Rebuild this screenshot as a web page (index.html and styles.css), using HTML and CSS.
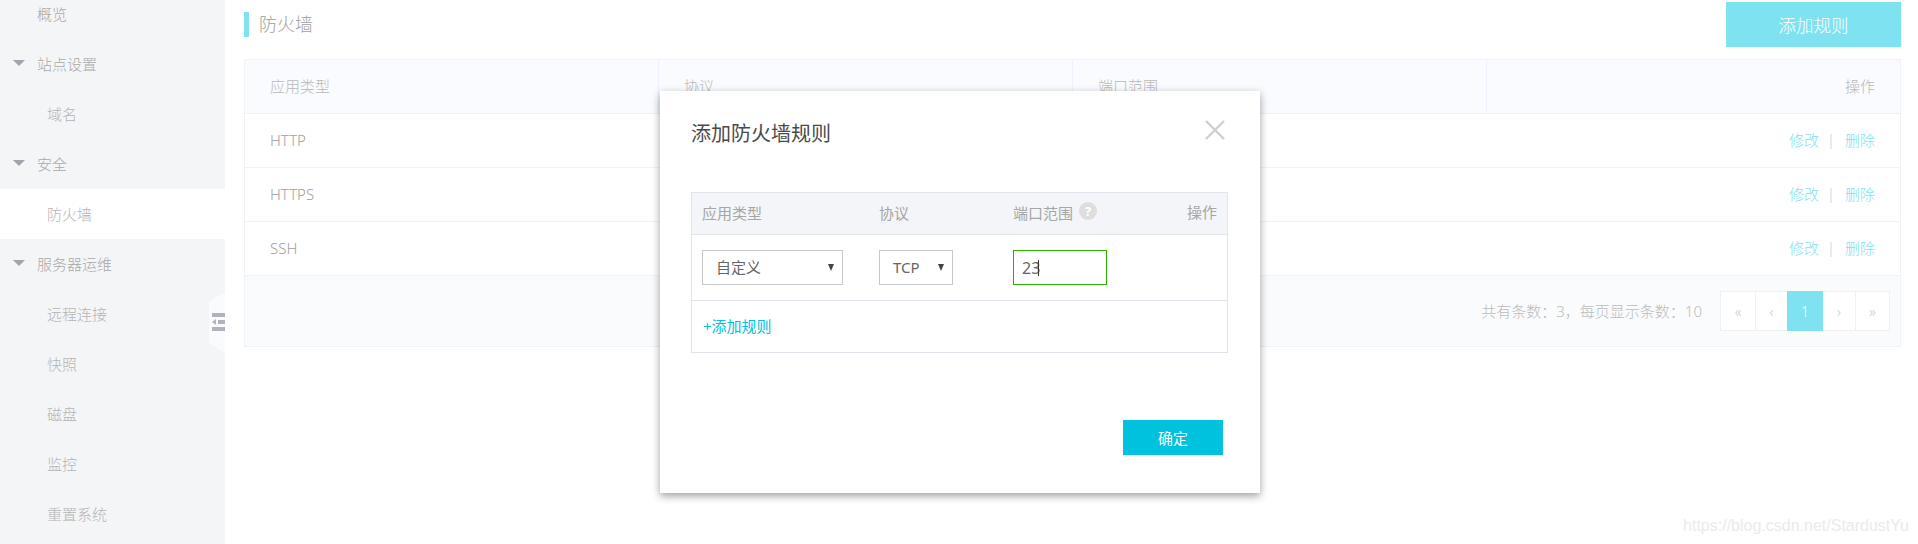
FILE: index.html
```html
<!DOCTYPE html>
<html lang="zh">
<head>
<meta charset="utf-8">
<title>防火墙</title>
<link rel="stylesheet" href="styles.css">
</head>
<body>
<div class="page">
  <nav class="sidebar">
    <div class="nav-item">概览</div>
    <div class="nav-item"><i class="tri"></i>站点设置</div>
    <div class="nav-item sub">域名</div>
    <div class="nav-item"><i class="tri"></i>安全</div>
    <div class="nav-item sub active">防火墙</div>
    <div class="nav-item"><i class="tri"></i>服务器运维</div>
    <div class="nav-item sub">远程连接</div>
    <div class="nav-item sub">快照</div>
    <div class="nav-item sub">磁盘</div>
    <div class="nav-item sub">监控</div>
    <div class="nav-item sub">重置系统</div>
    <div class="toggle">
      <svg width="19" height="62" viewBox="0 0 19 62">
        <polygon points="19,0 3,10 3,51 19,61" fill="#fafbfc"/>
        <rect x="6" y="21" width="13" height="4" fill="#aeb3bd"/>
        <rect x="12" y="28" width="7" height="4" fill="#aeb3bd"/>
        <polygon points="6,30 10,27 10,33" fill="#aeb3bd"/>
        <rect x="6" y="35" width="13" height="4" fill="#aeb3bd"/>
      </svg>
    </div>
  </nav>
  <main class="main">
    <header class="topbar">
      <h1 class="page-title">防火墙</h1>
      <button class="add-btn">添加规则</button>
    </header>
    <table class="rules">
      <colgroup><col class="c1"><col class="c1"><col class="c1"><col></colgroup>
      <thead>
        <tr><th>应用类型</th><th>协议</th><th>端口范围</th><th class="right">操作</th></tr>
      </thead>
      <tbody>
        <tr><td>HTTP</td><td></td><td></td><td class="right"><a>修改</a><span class="sep"></span><a>删除</a></td></tr>
        <tr><td>HTTPS</td><td></td><td></td><td class="right"><a>修改</a><span class="sep"></span><a>删除</a></td></tr>
        <tr><td>SSH</td><td></td><td></td><td class="right"><a>修改</a><span class="sep"></span><a>删除</a></td></tr>
      </tbody>
      <tfoot>
        <tr><td colspan="4">
          <div class="foot">
            <span class="count">共有条数：3，每页显示条数：10</span>
            <div class="pager">
              <span>«</span><span class="mid">‹</span><span class="on">1</span><span class="mid">›</span><span>»</span>
            </div>
          </div>
        </td></tr>
      </tfoot>
    </table>
  </main>
  <section class="modal">
    <div class="modal-head">
      <h2 class="modal-title">添加防火墙规则</h2>
      <svg class="close" width="20" height="20" viewBox="0 0 20 20"><path d="M1 1L19 19M19 1L1 19" stroke="#d0d0d0" stroke-width="2.4" fill="none"/></svg>
    </div>
    <div class="editor">
      <div class="ed-row ed-head">
        <span>应用类型</span>
        <span>协议</span>
        <span class="port">端口范围<b class="help">?</b></span>
        <span class="ed-op">操作</span>
      </div>
      <div class="ed-row ed-body">
        <div class="sel sel-a">自定义<i class="caret"></i></div>
        <div class="sel sel-b">TCP<i class="caret"></i></div>
        <div class="field">23<i class="cursor"></i></div>
      </div>
      <div class="ed-add">+添加规则</div>
    </div>
    <div class="modal-foot"><button class="ok">确定</button></div>
  </section>
  <div class="watermark">https://blog.csdn.net/StardustYu</div>
</div>
</body>
</html>
```
FILE: styles.css
```css
* { box-sizing: border-box; }
html, body { margin: 0; padding: 0; height: 544px; overflow: hidden; background: #fff; }
body { font-family: "Noto Sans", "Noto Sans CJK SC", sans-serif; font-size: 15px; font-weight: 300; color: #aaa; }
.page { position: relative; display: flex; width: 1918px; height: 544px; overflow: hidden; }

.sidebar { position: relative; flex: 0 0 225px; height: 544px; background: #f4f5f7; margin: 0; padding: 0; }
.nav-item { position: relative; top: -11px; height: 50px; line-height: 50px; padding-left: 37px; color: #a9a9a9; }
.nav-item.sub { padding-left: 47px; color: #b4b4b4; }
.nav-item.active { background: #fff; }
.tri { position: absolute; left: 13px; top: 21px; width: 0; height: 0; border-left: 6px solid transparent; border-right: 6px solid transparent; border-top: 6px solid #9fa4ad; }
.toggle { position: absolute; left: 206px; top: 292px; width: 19px; height: 62px; }
.toggle svg { display: block; }

.main { flex: 1; min-width: 0; padding: 2px 17px 0 19px; }
.topbar { display: flex; justify-content: space-between; align-items: center; height: 45px; margin-bottom: 12px; }
.page-title { margin: 0; height: 25px; line-height: 25px; padding-left: 10px; border-left: 5px solid #7fe2f0; font-size: 18px; font-weight: 300; color: #a0a0a0; }
.add-btn { width: 175px; height: 45px; border: 0; padding: 0; background: #7fe2f0; color: #fff; font: inherit; font-size: 17.5px; }

.rules { width: 100%; table-layout: fixed; border-collapse: collapse; border: 1px solid #eff2f6; }
.c1 { width: 414px; }
.rules th { height: 54px; padding: 0 25px 2px; text-align: left; font-weight: 300; color: #b9b9b9; background: #f9fbfe; border-bottom: 1px solid #ecf2fb; border-left: 1px solid #ecf2fb; }
.rules th:first-child { border-left: 0; }
.rules td { height: 54px; padding: 0 25px 2px; color: #a0a0a0; border-bottom: 1px solid #f1f2f4; }
.rules .right { text-align: right; }
.rules a { color: #7fe2f0; }
.sep { display: inline-block; width: 2px; height: 15px; margin: 0 13px 0 11px; background: #e9ebee; vertical-align: -3px; }
.rules tfoot td { height: 71px; padding: 0 10px 0 0; background: #fafbfd; border-bottom: 0; }
.foot { display: flex; justify-content: flex-end; align-items: center; gap: 18px; }
.count { color: #bbb; padding-bottom: 2px; }
.pager { display: flex; height: 40px; background: #fff; border: 1px solid #eff0f2; }
.pager span { width: 34px; line-height: 38px; text-align: center; color: #c8c8c8; border-left: 1px solid #eff0f2; }
.pager span:first-child { border-left: 0; }
.pager .mid { width: 32px; }
.pager .on { width: 36px; margin: -1px 0; line-height: 40px; background: #7fe2f0; color: #fff; border-left: 0; }
.pager .on + span { border-left: 0; }

.modal { position: absolute; left: 660px; top: 91px; width: 600px; height: 402px; padding: 0 32px 0 31px; background: #fff; box-shadow: 0 3px 8px rgba(0,0,0,.38); }
.modal-head { display: flex; justify-content: space-between; align-items: flex-start; height: 101px; padding-top: 28px; }
.modal-title { margin: 0; line-height: 30px; font-size: 20px; font-weight: 400; color: #4a4a4a; }
.close { margin: 1px 3px 0 0; }
.editor { width: 537px; height: 161px; border: 1px solid #e1e5eb; }
.ed-row { display: grid; grid-template-columns: 177px 134px 1fr; padding-left: 10px; align-items: center; position: relative; }
.ed-head { height: 42px; padding-bottom: 2px; background: #f4f5f8; border-bottom: 1px solid #e1e5eb; color: #a6a6a6; font-weight: 400; }
.port { display: flex; align-items: center; }
.help { width: 18px; height: 18px; margin: -3px 0 0 6px; border-radius: 50%; background: #dedede; color: #fff; font-size: 13px; line-height: 18px; text-align: center; font-weight: 700; }
.ed-op { position: absolute; right: 10px; top: 9px; line-height: 20px; }
.ed-body { height: 66px; border-bottom: 1px solid #e1e5eb; }
.sel { position: relative; height: 35px; line-height: 33px; background: #fff; border: 1px solid #c8c8c8; color: #666; font-weight: 400; }
.sel-a { width: 141px; padding-left: 13px; }
.sel-b { width: 74px; padding-left: 13px; }
.caret { position: absolute; right: 8px; top: 13px; width: 0; height: 0; border-left: 3.5px solid transparent; border-right: 3.5px solid transparent; border-top: 7px solid #444; }
.field { display: flex; align-items: center; width: 94px; height: 35px; padding-left: 8px; background: #fff; border: 1px solid #2bb000; color: #666; font-size: 16px; font-weight: 400; }
.cursor { width: 1px; height: 16px; margin-left: -2px; background: #333; }
.ed-add { height: 51px; line-height: 50px; padding-left: 11px; color: #00c1de; font-weight: 400; }
.modal-foot { display: flex; justify-content: flex-end; padding: 67px 5px 0 0; }
.ok { width: 100px; height: 35px; border: 0; padding: 0 0 1px; background: #00c1de; color: #fff; font: inherit; font-weight: 400; }

.watermark { position: absolute; right: 9px; top: 516px; font-family: "Liberation Sans", sans-serif; font-size: 16px; font-weight: 400; line-height: 20px; color: #ebebeb; }
```
